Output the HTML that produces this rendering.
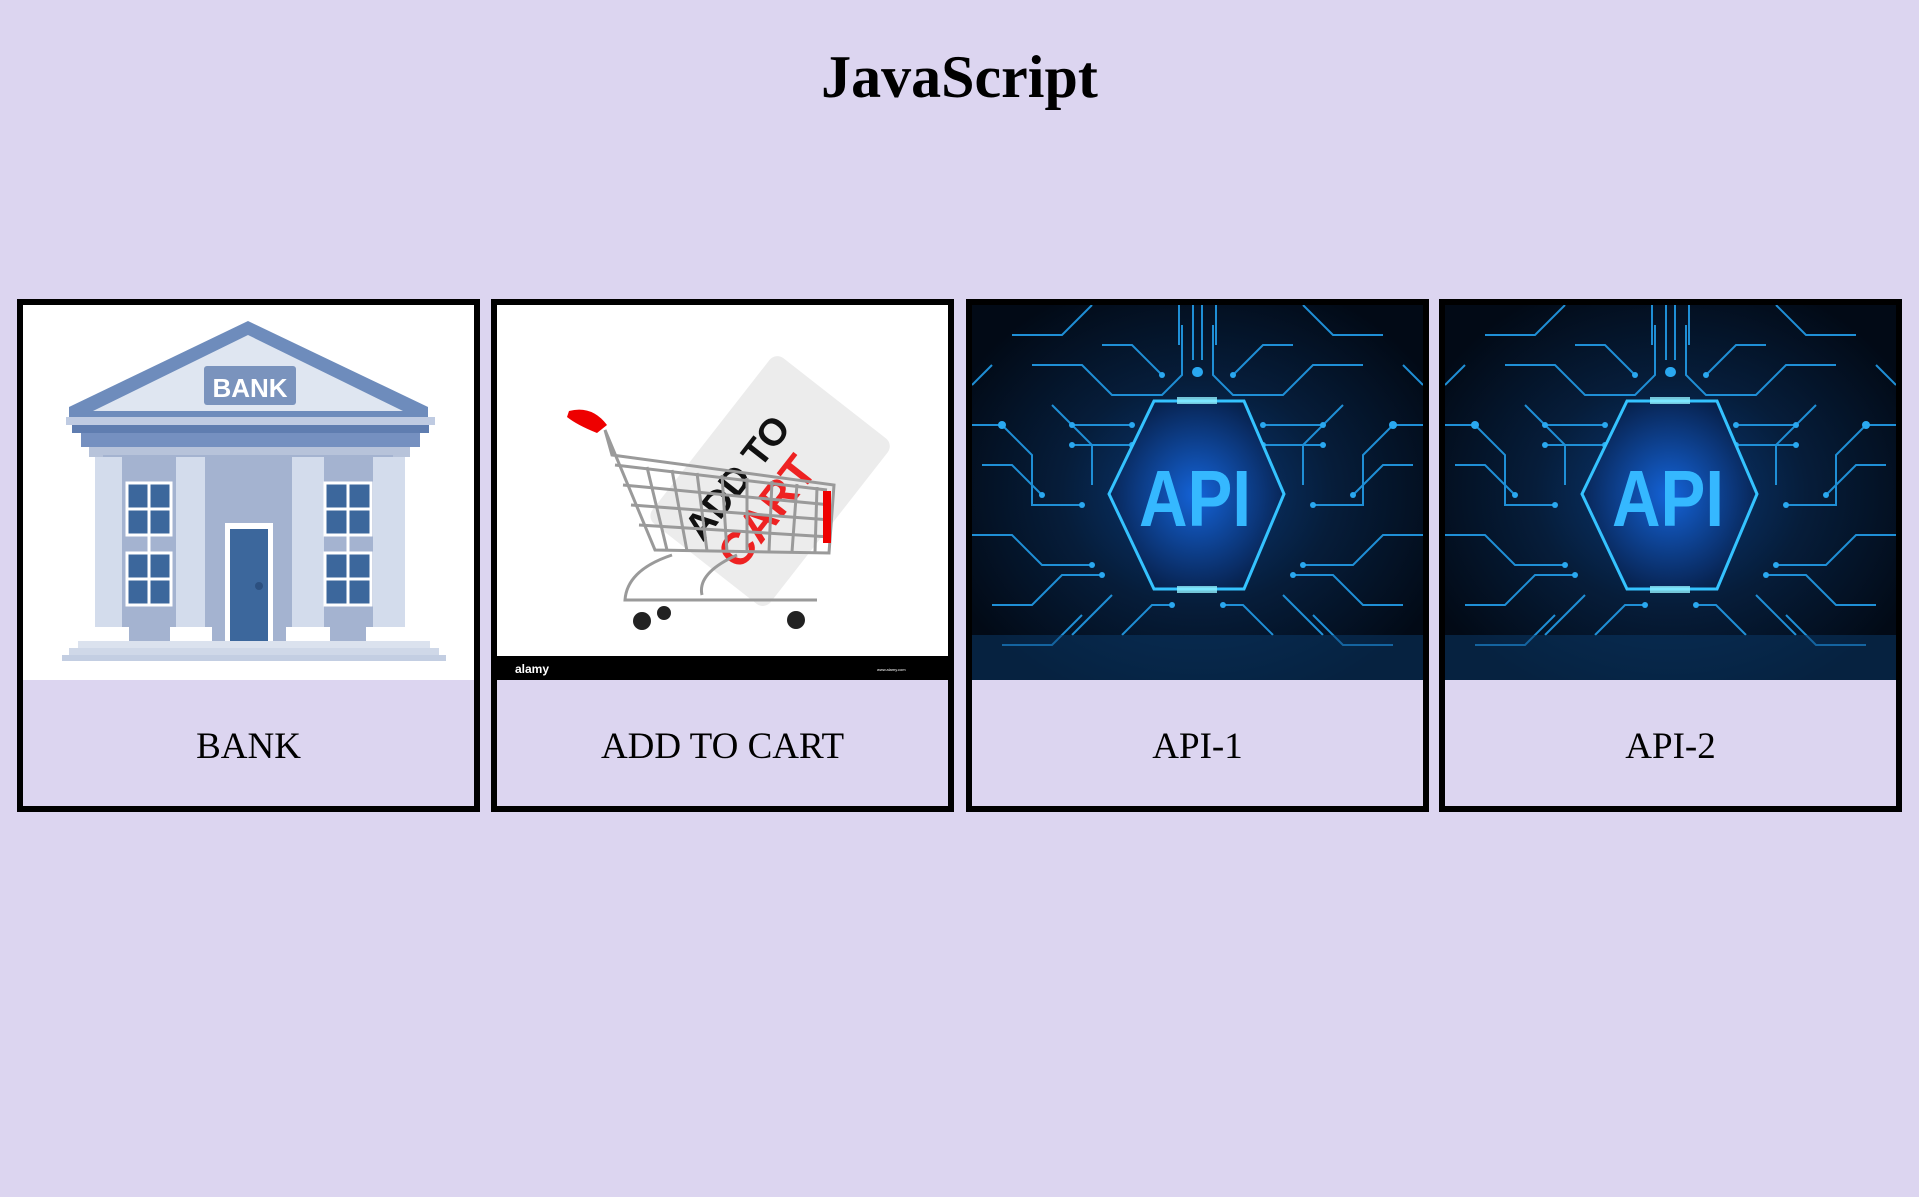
<!DOCTYPE html>
<html><head><meta charset="utf-8"><style>
html,body{margin:0;padding:0;background:#dcd5f0;width:1919px;height:1197px;overflow:hidden}
h1{position:absolute;left:0;width:1919px;top:0;margin:0;text-align:center;font:bold 60px "Liberation Serif",serif;line-height:1;padding-top:47px;color:#000}
.card{position:absolute;top:299px;width:451px;height:501px;border:6px solid #000;background:#dcd5f0}
.card svg{display:block;width:451px;height:375px}
.lab{position:absolute;left:0;top:379px;width:451px;height:126px;text-align:center;font:37px "Liberation Serif",serif;line-height:126px;color:#000}
</style></head><body>
<h1>JavaScript</h1>

<div class="card" style="left:17px">
<svg viewBox="0 0 451 375">
<rect width="451" height="375" fill="#fff"/>
<polygon points="225,16 46,102 46,112 405,112 405,102" fill="#6e8cbc"/>
<polygon points="225,30 70,106 380,106" fill="#dfe6f1"/>
<rect x="181" y="61" width="92" height="39" rx="3" fill="#7a93bd"/>
<text x="227" y="92" text-anchor="middle" font-family="Liberation Sans,sans-serif" font-weight="bold" font-size="26" fill="#fff">BANK</text>
<rect x="43" y="112" width="369" height="8" fill="#bfcbe2"/>
<rect x="49" y="120" width="357" height="8" fill="#5f7db0"/>
<rect x="58" y="128" width="339" height="14" fill="#7590c0"/>
<rect x="66" y="142" width="321" height="10" fill="#b7c3da"/>
<rect x="80" y="150" width="290" height="186" fill="#a4b3d0"/>
<g fill="#d3dcec"><rect x="72" y="152" width="27" height="170"/><rect x="153" y="152" width="29" height="170"/><rect x="269" y="152" width="32" height="170"/><rect x="350" y="152" width="32" height="170"/></g>
<g fill="#fff"><rect x="66" y="322" width="40" height="14"/><rect x="147" y="322" width="42" height="14"/><rect x="263" y="322" width="44" height="14"/><rect x="343" y="322" width="44" height="14"/></g>
<g fill="#3c679c" stroke="#fff" stroke-width="3"><rect x="104" y="178" width="44" height="52"/><rect x="104" y="248" width="44" height="52"/><rect x="302" y="178" width="46" height="52"/><rect x="302" y="248" width="46" height="52"/></g>
<g stroke="#fff" stroke-width="3"><line x1="126" y1="178" x2="126" y2="300"/><line x1="104" y1="204" x2="148" y2="204"/><line x1="104" y1="274" x2="148" y2="274"/><line x1="325" y1="178" x2="325" y2="300"/><line x1="302" y1="204" x2="348" y2="204"/><line x1="302" y1="274" x2="348" y2="274"/></g>
<rect x="202" y="218" width="48" height="118" fill="#fff"/>
<rect x="207" y="224" width="38" height="112" fill="#3c679c"/>
<circle cx="236" cy="281" r="4" fill="#2c5080"/>
<rect x="55" y="336" width="352" height="7" fill="#dbe2ee"/>
<rect x="46" y="343" width="370" height="7" fill="#cfd8e8"/>
<rect x="39" y="350" width="384" height="6" fill="#c3cee2"/>
</svg>
<div class="lab">BANK</div></div>

<div class="card" style="left:491px">
<svg viewBox="0 0 451 375">
<rect width="451" height="375" fill="#fff"/>
<g transform="rotate(-52 270 180)"><rect x="170" y="105" width="210" height="150" rx="10" fill="#ececec"/>
<text x="185" y="165" font-family="Liberation Sans,sans-serif" font-weight="bold" font-size="38" fill="#111">ADD TO</text>
<text x="185" y="212" font-family="Liberation Sans,sans-serif" font-weight="bold" font-size="46" fill="#e22">CART</text></g>
<g fill="none" stroke="#9a9a9a" stroke-width="3">
<polygon points="108,125 158,245 332,248 337,180 115,150"/>
<path d="M118,160 L330,185 M126,180 L334,200 M134,200 L334,215 M142,220 L333,232"/>
<path d="M150,162 L170,245 M175,165 L190,246 M200,168 L210,246 M225,170 L230,247 M250,173 L250,247 M275,176 L272,247 M300,179 L295,247 M320,182 L318,247"/>
<path d="M175,250 Q130,265 128,295 L320,295 M240,250 Q200,268 205,290"/>
</g>
<path d="M72,106 Q95,100 110,120 L100,128 Q80,120 70,112 Z" fill="#e00"/>
<rect x="326" y="186" width="8" height="52" fill="#e00"/>
<g fill="#222"><circle cx="145" cy="316" r="9"/><circle cx="167" cy="308" r="7"/><circle cx="299" cy="315" r="9"/></g>
<rect x="0" y="351" width="451" height="24" fill="#000"/>
<text x="18" y="368" font-family="Liberation Sans,sans-serif" font-weight="bold" font-size="12" fill="#fff">alamy</text>
<text x="380" y="366" font-family="Liberation Sans,sans-serif" font-size="4" fill="#fff">www.alamy.com</text>
</svg>
<div class="lab">ADD TO CART</div></div>

<div class="card" style="left:966px">
<svg viewBox="0 0 451 375">
<defs><radialGradient id="g1" cx="50%" cy="50%" r="60%"><stop offset="0" stop-color="#0a3a7a"/><stop offset="0.5" stop-color="#061d3a"/><stop offset="1" stop-color="#020a16"/></radialGradient>
<radialGradient id="g2" cx="50%" cy="50%" r="55%"><stop offset="0" stop-color="#1463d8"/><stop offset="1" stop-color="#07204a"/></radialGradient>
<g id="circ" fill="none" stroke="#1f8fd6" stroke-width="2">
<path d="M0,120 L30,120 L60,150 L60,200 L110,200 M10,160 L40,160 L70,190 M0,230 L40,230 L70,260 L120,260 M20,300 L60,300 L90,270 L130,270 M60,60 L110,60 L140,90 L190,90 L210,70 L210,20 M40,30 L90,30 L120,0 M130,40 L160,40 L190,70 M100,120 L160,120 M100,140 L160,140 M80,100 L120,140 L120,180 M150,330 L180,300 L200,300 M100,330 L140,290 M30,340 L80,340 L110,310 M0,80 L20,60 M230,0 L230,55 M244,0 L244,40"/>
<g fill="#2aa8f0" stroke="none"><circle cx="110" cy="200" r="3"/><circle cx="70" cy="190" r="3"/><circle cx="120" cy="260" r="3"/><circle cx="130" cy="270" r="3"/><circle cx="160" cy="120" r="3"/><circle cx="160" cy="140" r="3"/><circle cx="100" cy="120" r="3"/><circle cx="100" cy="140" r="3"/><circle cx="225" cy="67" r="5"/><circle cx="190" cy="70" r="3"/><circle cx="200" cy="300" r="3"/><circle cx="30" cy="120" r="4"/></g>
</g></defs>
<rect width="451" height="375" fill="url(#g1)"/>
<use href="#circ"/>
<use href="#circ" transform="translate(451 0) scale(-1 1)"/>
<polygon points="137,189 182,96 272,96 312,189 272,284 182,284" fill="url(#g2)" stroke="#35c3ff" stroke-width="3"/>
<rect x="205" y="92" width="40" height="7" fill="#8ff0ff" opacity="0.8"/>
<rect x="205" y="281" width="40" height="7" fill="#8ff0ff" opacity="0.8"/>
<text x="167" y="221" textLength="112" lengthAdjust="spacingAndGlyphs" font-family="Liberation Sans,sans-serif" font-weight="bold" font-size="80" fill="#35b8ff">API</text>
<rect x="0" y="330" width="451" height="45" fill="#0a3a6a" opacity="0.5"/>
</svg>
<div class="lab">API-1</div></div>

<div class="card" style="left:1439px">
<svg viewBox="0 0 451 375">
<rect width="451" height="375" fill="url(#g1)"/>
<use href="#circ"/>
<use href="#circ" transform="translate(451 0) scale(-1 1)"/>
<polygon points="137,189 182,96 272,96 312,189 272,284 182,284" fill="url(#g2)" stroke="#35c3ff" stroke-width="3"/>
<rect x="205" y="92" width="40" height="7" fill="#8ff0ff" opacity="0.8"/>
<rect x="205" y="281" width="40" height="7" fill="#8ff0ff" opacity="0.8"/>
<text x="167" y="221" textLength="112" lengthAdjust="spacingAndGlyphs" font-family="Liberation Sans,sans-serif" font-weight="bold" font-size="80" fill="#35b8ff">API</text>
<rect x="0" y="330" width="451" height="45" fill="#0a3a6a" opacity="0.5"/>
</svg>
<div class="lab">API-2</div></div>
</body></html>
